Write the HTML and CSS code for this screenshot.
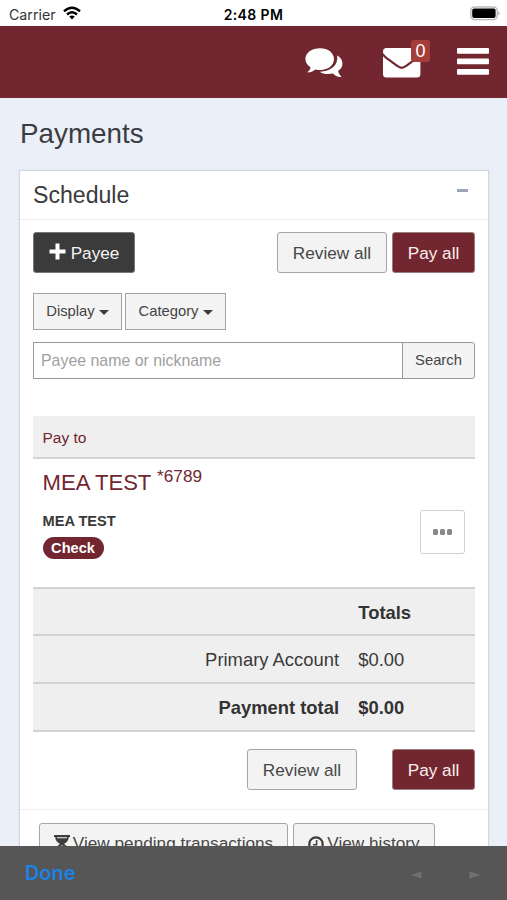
FILE: index.html
```html
<!DOCTYPE html>
<html lang="en">
<head>
<meta charset="utf-8">
<title>Payments</title>
<link rel="stylesheet" href="styles.css">
</head>
<body>
<div class="screen">
  <div class="status">
    <div class="carrier"><span>Carrier</span>
      <svg class="wifi" width="18" height="14" viewBox="0 0 18 14"><g fill="none" stroke="#000" stroke-width="2.5"><path d="M1 5.3Q9-1.7 17 5.3"/><path d="M4 8.5Q9 4.1 14 8.5"/></g><path d="M6.3 10.6Q9 8.5 11.7 10.6L9 13.6Z"/></svg>
    </div>
    <div class="time">2:48 PM</div>
    <svg class="battery" width="30" height="15" viewBox="0 0 30 15"><rect x=".8" y="1" width="26.4" height="12.6" rx="3.8" fill="#fff" stroke="#b9b9b9" stroke-width="1.4"/><rect x="2.2" y="2.4" width="23.4" height="9.6" rx="2" /><path d="M28.3 5.2Q30.8 7.3 28.3 9.4Z" fill="#aaa"/></svg>
  </div>
  <header class="header">
    <svg class="chat" width="38" height="31" viewBox="0 0 38 31"><path fill="#fff" d="M32.2 7.5C35.7 9.6 37.8 12.6 37.4 16.3C37.2 19.1 35.7 21.1 33.2 22.8C33.5 25.2 34.4 26.8 36 28.1Q36.7 29 35.6 29.1C32.5 29.2 30.1 27.9 28 25.6C22.5 26.7 17.5 26 14.5 23.4C25.5 23.5 33.5 17.5 32.2 7.5Z"/><path fill="#fff" stroke="#722630" stroke-width="3" paint-order="stroke" d="M15.2.2C23 .2 29 4.8 29 11.1C29 17.7 22.6 22.2 15 22Q12.7 22 10.3 21.5C8 23.5 5.4 24.5 3 24.6Q2.2 24.5 2.8 23.8C4.5 22.4 5.3 21 5.5 19.2C2.2 17.2.4 14.2.4 11.1C.4 4.8 6.6.2 15.2.2Z"/></svg>
    <div class="mail">
      <svg width="38" height="30" viewBox="0 0 38 30"><rect width="37.4" height="29.5" rx="3.5" fill="#fff"/><path d="M-.5 5.8C1 8.3 3 9.7 5 11.2L14.5 18Q18.7 21.6 22.9 18L32.4 11.2C34.4 9.7 36.4 8.3 37.9 5.8" fill="none" stroke="#722630" stroke-width="2.2"/></svg>
      <span class="badge">0</span>
    </div>
    <svg class="menu" width="32" height="28" viewBox="0 0 32 28" fill="#fff"><rect y="0" width="32" height="5.7" rx="1"/><rect y="10.5" width="32" height="5.7" rx="1"/><rect y="21" width="32" height="5.7" rx="1"/></svg>
  </header>
  <main class="content">
    <h1>Payments</h1>
    <section class="card">
      <div class="card-head"><h2>Schedule</h2><span class="collapse"></span></div>
      <div class="card-body">
        <div class="actions">
          <button class="btn dark"><svg width="17" height="17" viewBox="0 0 17 17"><path d="M8.5 .5V16.5M.5 8.5H16.5" stroke="#fff" stroke-width="4"/></svg><span>Payee</span></button>
          <button class="btn review">Review all</button>
          <button class="btn primary">Pay all</button>
        </div>
        <div class="filters">
          <button class="filter display">Display<i class="caret"></i></button>
          <button class="filter category">Category<i class="caret"></i></button>
        </div>
        <div class="search"><input type="text" placeholder="Payee name or nickname"><button>Search</button></div>
        <div class="pay-head">Pay to</div>
        <div class="payee">
          <div>
            <div class="payee-name">MEA TEST <span class="acct">*6789</span></div>
            <div class="nick">MEA TEST</div>
            <span class="pill">Check</span>
          </div>
          <button class="more"><i></i><i></i><i></i></button>
        </div>
        <div class="totals">
          <div class="row strong"><span></span><span>Totals</span></div>
          <div class="row"><span>Primary Account</span><span>$0.00</span></div>
          <div class="row strong"><span>Payment total</span><span>$0.00</span></div>
        </div>
        <div class="actions lower">
          <button class="btn review">Review all</button>
          <button class="btn primary">Pay all</button>
        </div>
      </div>
      <div class="card-foot">
        <button class="btn pending"><svg width="16" height="18" viewBox="0 0 16 18"><path d="M0 0H16V2H14.8C14.8 5.5 12.5 7.5 10 9C12.5 10.5 14.8 12.5 14.8 16H16V18H0V16H1.2C1.2 12.5 3.5 10.5 6 9C3.5 7.5 1.2 5.5 1.2 2H0ZM3 2.2V3.2H13V2.2ZM8 10.2C5 11.5 3.2 13 3 16H13C12.8 13 11 11.5 8 10.2Z" fill="#3d3d3d" fill-rule="evenodd"/></svg><span>View pending transactions</span></button>
        <button class="btn history"><svg width="16" height="16" viewBox="0 0 16 16" fill="none" stroke="#3d3d3d"><circle cx="8" cy="8" r="6.7" stroke-width="2.2"/><path d="M8.6 4V8.7H5" stroke-width="1.5"/></svg><span>View history</span></button>
      </div>
    </section>
  </main>
  <footer class="toolbar">
    <span class="done">Done</span>
    <svg width="70" height="8" viewBox="0 0 70 8" fill="#717171"><path d="M0 4L10.5.5V7.5Z"/><path d="M69.5 4L58.5.5V7.5Z"/></svg>
  </footer>
</div>
</body>
</html>
```
FILE: styles.css
```css
* { box-sizing: border-box; }
body { margin: 0; font-family: "Liberation Sans", Arial, sans-serif; color: #3a3a3a; }
h1, h2 { margin: 0; font-weight: 400; }
button, input { font-family: inherit; margin: 0; }
svg { display: block; flex: none; }
.screen { width: 507px; height: 900px; display: flex; flex-direction: column; overflow: hidden; background: #ebeff8; }
.status { height: 26px; flex: none; background: #fff; display: grid; grid-template-columns: 1fr auto 1fr; align-items: center; padding: 2px 7px 0 9px; font-family: Inter, sans-serif; color: #000; }
.carrier { display: flex; align-items: center; gap: 7px; font-size: 14.2px; color: #333; }
.wifi { margin-top: -3px; }
.time { font-size: 14px; font-weight: 600; letter-spacing: .4px; margin-right: 2px; }
.battery { justify-self: end; margin: -2px 0 0; }
.header { height: 72px; flex: none; background: #722630; display: flex; padding: 22px 19px 0 305px; }
.mail { position: relative; margin-left: 40px; }
.badge { position: absolute; left: 28px; top: -8.5px; width: 19px; height: 22px; border-radius: 3px; background: #a53e38; color: #fff; font-size: 18px; line-height: 23px; text-align: center; }
.menu { margin-left: 36px; }
.content { flex: 1; min-height: 0; padding: 0 19px; overflow: hidden; }
h1 { height: 72px; font-size: 27.8px; line-height: 72px; padding-left: 1px; color: #3b3d42; }
.card { background: #fff; border: 1px solid #d3d7e0; box-shadow: 0 0 1px #c5cad5; height: 760px; width: 470px; }
.card-head { height: 48.5px; border-bottom: 1px solid #eee; padding: 0 20px 0 13px; display: flex; justify-content: space-between; }
h2 { font-size: 23.1px; line-height: 48px; }
.collapse { width: 11px; height: 3px; background: #9ca4bd; margin-top: 18px; }
.card-body { padding: 12.5px 13px 0; height: 590.5px; border-bottom: 1px solid #f0f0f0; }
.btn { height: 41px; border: 1px solid #a6a6a6; border-radius: 3px; background: #f3f3f3; color: #474747; font-size: 17.2px; padding: 1px 0 0; display: flex; align-items: center; justify-content: center; white-space: nowrap; }
.actions { display: flex; height: 41px; }
.dark { width: 102px; margin-right: auto; background: #3b3b3b; border-color: #777; color: #f4f4f4; gap: 5px; }
.dark svg { margin-top: -3px; }
.review { width: 110px; margin-right: 5px; }
.primary { width: 83px; background: #722630; border-color: #9a7d7f; color: #fbeeee; }
.filters { display: flex; gap: 3px; margin-top: 19.5px; }
.filter { height: 37px; border: 1px solid #a3a3a3; background: #f4f4f4; color: #444; font-size: 14.8px; padding: 0; display: flex; align-items: center; justify-content: center; gap: 4px; }
.display { width: 89px; }
.category { width: 101px; }
.caret { border: 5px solid transparent; border-top-color: #3c3c3c; border-bottom: 0; margin-top: 2px; }
.search { display: flex; height: 37px; margin-top: 12px; }
.search input { flex: 1; min-width: 0; border: 1px solid #999; border-radius: 0; background: #fff; padding: 1px 7px 0; font-size: 15.9px; color: #444; }
.search input::placeholder { color: #a0a0a0; opacity: 1; }
.search button { width: 73px; margin-left: -1px; border: 1px solid #999; border-radius: 0 3px 3px 0; background: #f4f4f4; color: #444; font-size: 14.8px; padding: 0; }
.pay-head { height: 43px; margin-top: 37.5px; background: #efefef; border-bottom: 2px solid #d5d5d5; color: #722630; font-size: 15.5px; line-height: 44px; padding-left: 9.5px; }
.payee { height: 127.5px; padding: 0 10px 0 9.5px; display: flex; justify-content: space-between; }
.payee-name { color: #722630; font-size: 22.1px; line-height: 28px; height: 28px; margin-top: 10px; white-space: nowrap; }
.acct { font-size: 17.2px; display: inline-block; line-height: 20px; transform: translateY(-8px); }
.nick { font-size: 14.6px; font-weight: 700; line-height: 18px; margin-top: 15px; }
.pill { display: block; width: 61px; height: 22px; margin-top: 7px; border-radius: 11px; background: #722630; color: #fff; font-size: 14.6px; font-weight: 700; line-height: 22px; text-align: center; }
.more { width: 45px; height: 44px; margin-top: 51px; border: 1px solid #d0d0d0; border-radius: 3px; background: #fff; padding: 0; display: flex; align-items: center; justify-content: center; gap: 1.5px; }
.more i { width: 5.3px; height: 5.3px; border-radius: 1.5px; background: #888; }
.totals { border-top: 2px solid #d2d2d2; }
.row { height: 47.7px; border-bottom: 2px solid #d2d2d2; background: #efefef; display: grid; grid-template-columns: 306px 1fr; column-gap: 19.3px; line-height: 48px; font-size: 18.4px; }
.row span:first-child { text-align: right; }
.strong { font-weight: 700; color: #333; }
.lower { justify-content: flex-end; margin-top: 17.5px; }
.lower .review { margin-right: 35px; }
.card-foot { display: flex; gap: 5px; padding: 12.5px 19px 0; }
.pending { width: 249px; gap: 3px; }
.history { width: 142px; gap: 3px; }
.toolbar { height: 54px; flex: none; background: #565656; display: flex; align-items: center; justify-content: space-between; padding: 0 26px 0 25px; }
.toolbar svg { margin-top: 4px; }
.done { font-family: Inter, sans-serif; font-size: 19.9px; font-weight: 600; color: #1b82e6; }
```
